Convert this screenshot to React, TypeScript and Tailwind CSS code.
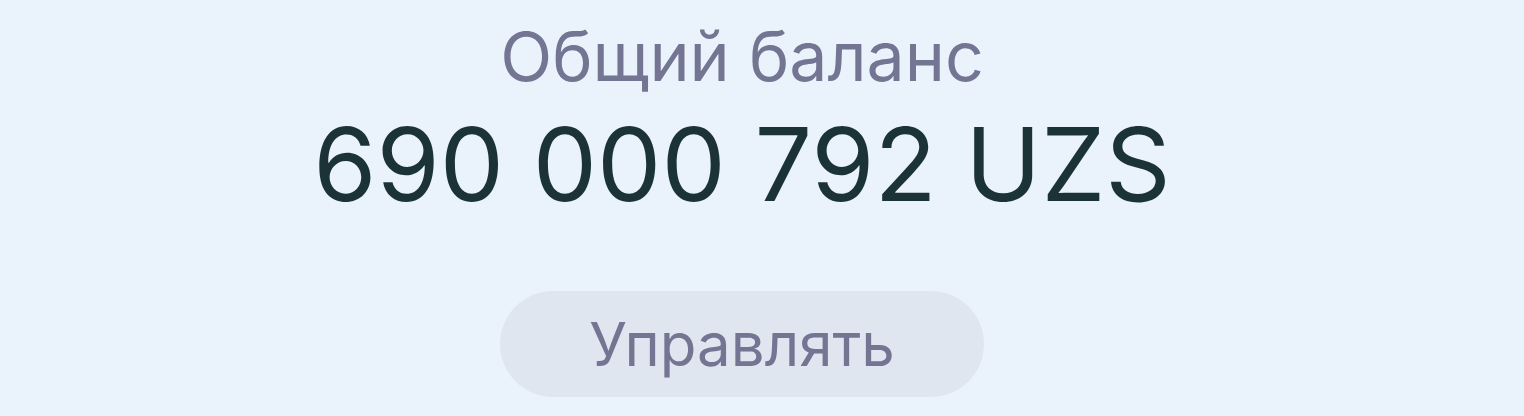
export default function App() {
  return (
    <div
      className="w-full h-[416px] bg-[#eaf3fc] flex flex-col items-center pr-10 overflow-hidden"
      style={{ fontFamily: 'Inter, "Noto Sans", sans-serif' }}
    >
      <div className="mt-[16px] text-[68px] leading-[80px] text-[#737592]">Общий баланс</div>
      <div className="mt-[12px] text-[102px] leading-[112px] text-[#1b3336]">690 000 792 UZS</div>
      <button className="mt-[71px] w-[484px] h-[106px] rounded-full bg-[#dfe6f0] text-[60px] text-[#737592]">
        Управлять
      </button>
    </div>
  );
}
